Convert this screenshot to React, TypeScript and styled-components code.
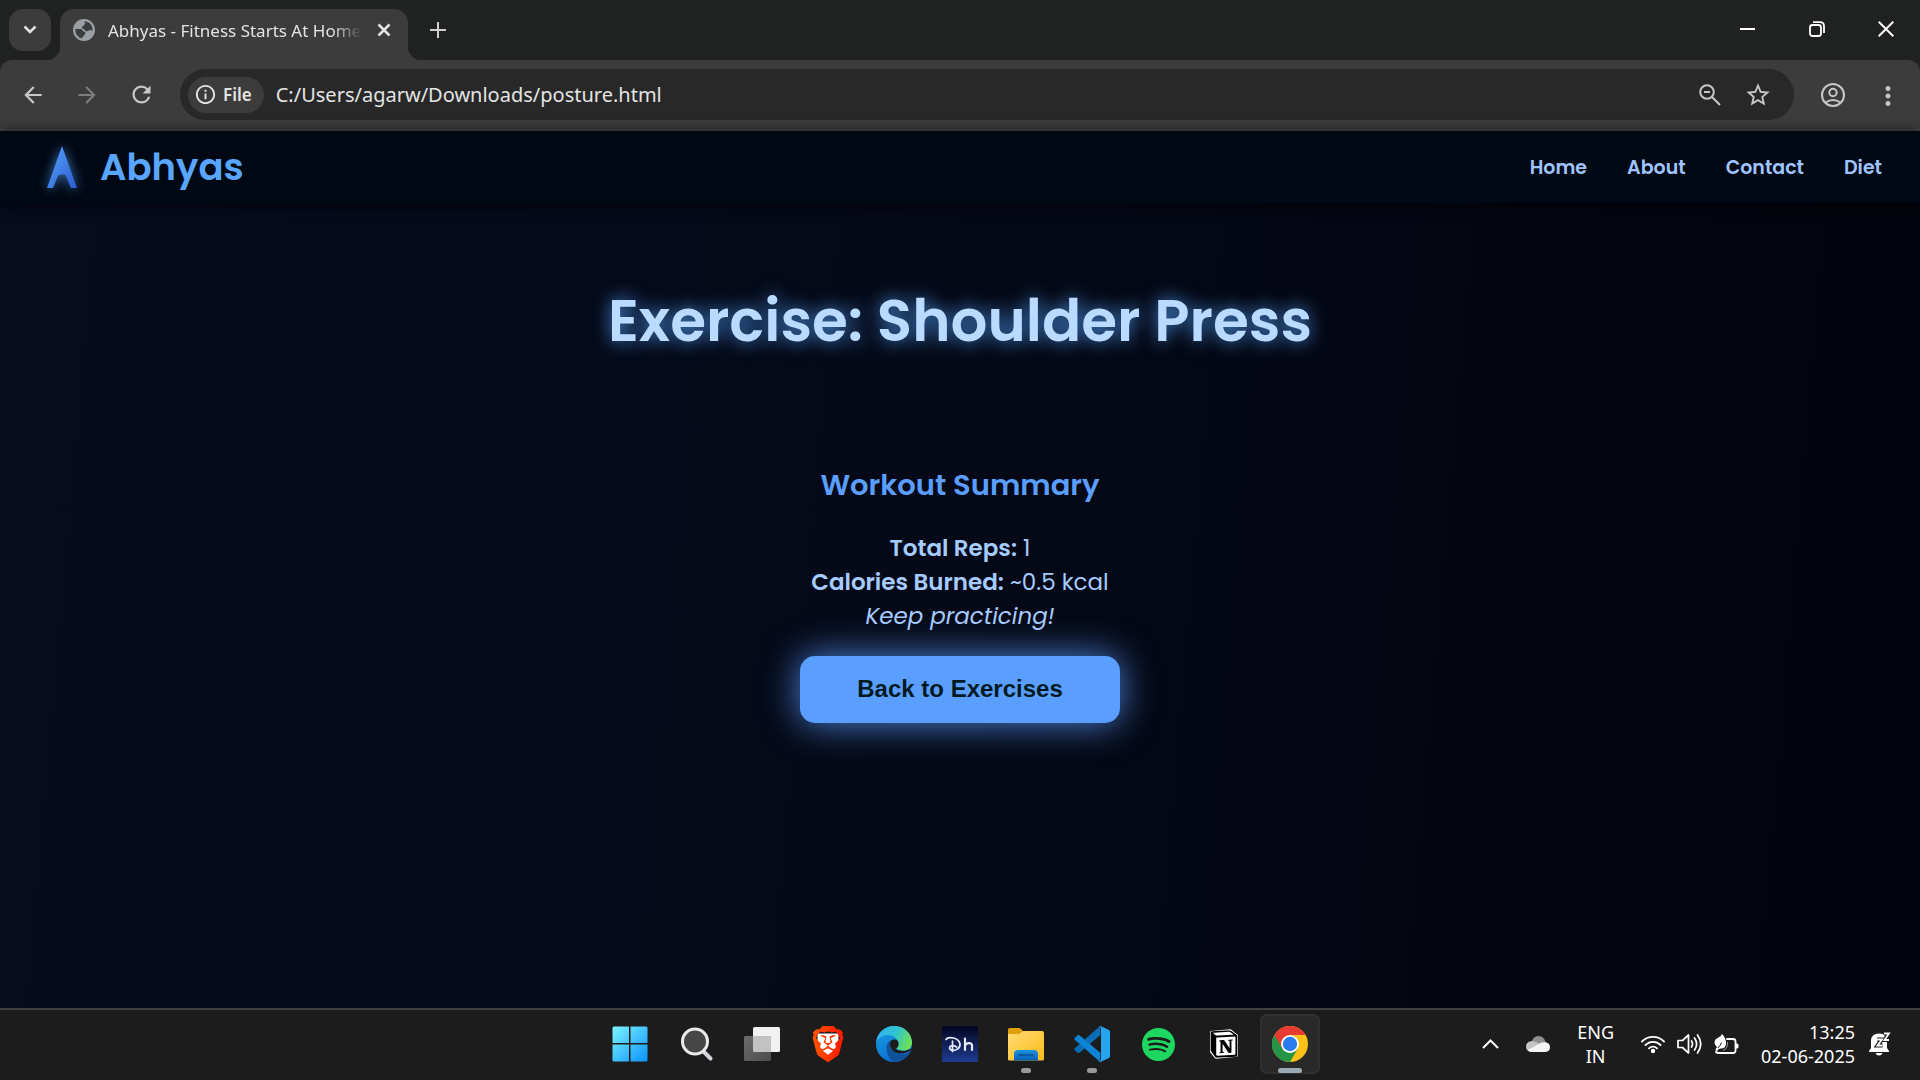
import React from "react";
import styled, { createGlobalStyle, css } from "styled-components";
import { SiBrave, SiNotion, SiSpotify } from "react-icons/si";
import {
  MdArrowBack,
  MdArrowForward,
  MdRefresh,
  MdStarOutline,
  MdOutlineInfo,
  MdMoreVert,
} from "react-icons/md";

const ui = `"Noto Sans", "Open Sans", sans-serif`;
const brand = `Poppins, Inter, "Open Sans", sans-serif`;

const GlobalStyle = createGlobalStyle`
  *, *::before, *::after { box-sizing: border-box; }
  body { margin: 0; background: #020308; }
  h1, h2, p { margin: 0; }
  button { border: 0; padding: 0; background: none; color: inherit; font: inherit; cursor: pointer; }
  a { color: inherit; text-decoration: none; }
  svg { display: block; flex: none; }
`;

const Screen = styled.div`
  display: flex;
  flex-direction: column;
  min-height: 100vh;
  font-family: ${ui};
  color: #e3e3e3;
`;

/* ---------- browser chrome ---------- */

const TabStrip = styled.div`
  display: flex;
  align-items: flex-end;
  height: 60px;
  padding-left: 9px;
  background: #202221;
`;

const TabSearch = styled.button`
  display: grid;
  place-items: center;
  align-self: flex-start;
  width: 42px;
  height: 42px;
  margin-top: 9px;
  border-radius: 14px;
  background: #3c3c3c;
`;

const Tab = styled.div`
  position: relative;
  display: flex;
  align-items: center;
  width: 348px;
  height: 51px;
  margin-left: 9px;
  padding: 0 12px 9px 12px;
  border-radius: 14px 14px 0 0;
  background: #3c3c3c;

  &::before,
  &::after {
    content: "";
    position: absolute;
    bottom: 0;
    width: 14px;
    height: 14px;
  }
  &::before {
    right: 100%;
    background: radial-gradient(circle at 0 0, transparent 14px, #3c3c3c 15px);
  }
  &::after {
    left: 100%;
    background: radial-gradient(circle at 100% 0, transparent 14px, #3c3c3c 15px);
  }
`;

const TabTitle = styled.span`
  flex: 1;
  margin: 2px 10px 0 12px;
  overflow: hidden;
  white-space: nowrap;
  font-size: 17px;
  line-height: 24px;
  mask-image: linear-gradient(90deg, #000 88%, transparent);
`;

const BareButton = styled.button<{ $size?: number; $dim?: boolean }>`
  display: grid;
  place-items: center;
  width: ${(p) => p.$size ?? 24}px;
  height: ${(p) => p.$size ?? 24}px;
  color: ${(p) => (p.$dim ? "#7d7d7d" : "#c7c7c7")};
`;

const NewTab = styled(BareButton)`
  align-self: center;
  margin-left: 18px;
`;

const WindowControls = styled.div`
  display: flex;
  align-self: stretch;
  margin-left: auto;
  color: #fff;
`;

const WindowButton = styled.button`
  display: grid;
  place-items: center;
  width: 69px;
  height: 58px;
`;

const ToolbarFrame = styled.div`
  background: #202221;
`;

const Toolbar = styled.div`
  display: flex;
  align-items: center;
  height: 71px;
  padding: 0 19px;
  border-radius: 12px 12px 0 0;
  background: #3c3c3c;
  border-bottom: 2px solid #444;
`;

const NavGroup = styled.div`
  display: flex;
  gap: 26px;
  margin-right: 25px;
`;

const Omnibox = styled.div`
  display: flex;
  flex: 1;
  align-items: center;
  gap: 12px;
  height: 51px;
  padding: 0 22px 0 8px;
  border-radius: 26px;
  background: #282828;
`;

const FileChip = styled.button`
  display: flex;
  align-items: center;
  gap: 6px;
  height: 36px;
  padding: 0 12px 0 6px;
  border-radius: 18px;
  background: #3c3c3c;
  font-size: 17px;
  font-weight: 600;
`;

const Address = styled.input`
  flex: 1;
  min-width: 0;
  padding: 0;
  border: 0;
  outline: 0;
  background: none;
  color: #e3e3e3;
  font-family: ${ui};
  font-size: 20px;
  line-height: 28px;
`;

const OmniActions = styled.div`
  display: flex;
  gap: 20px;
`;

const ToolActions = styled.div`
  display: flex;
  gap: 26px;
  margin-left: 25px;
`;

/* ---------- web page ---------- */

const Page = styled.div`
  display: flex;
  flex: 1;
  flex-direction: column;
  background: linear-gradient(95deg, #060b1e, #050917 50%, #02030c);
  font-family: ${brand};
`;

const SiteHeader = styled.header`
  display: flex;
  align-items: center;
  justify-content: space-between;
  height: 72px;
  padding: 0 38px 0 40px;
  background: #000814;
  box-shadow: 0 2px 12px rgba(0, 0, 0, 0.8);
`;

const Brand = styled.a`
  display: flex;
  align-items: center;
  gap: 16px;
  color: #58a6ff;
  font-size: 37px;
  font-weight: 600;
  line-height: 48px;
`;

const BrandMark = styled.svg`
  filter: drop-shadow(0 0 6px rgba(88, 166, 255, 0.7));
`;

const SiteNav = styled.nav`
  display: flex;
  gap: 40px;
  color: #a0c4ff;
  font-size: 19px;
  font-weight: 600;
`;

const Main = styled.main`
  display: flex;
  flex-direction: column;
  align-items: center;
  padding-top: 76px;
  text-align: center;
`;

const Title = styled.h1`
  color: #bbdaff;
  font-size: 58px;
  font-weight: 600;
  line-height: 84px;
  text-shadow: 0 0 18px #4a90e2;
`;

const Summary = styled.section`
  display: flex;
  flex-direction: column;
  align-items: center;
  margin-top: 100px;
  color: #a5ccff;
  font-size: 23px;
  line-height: 34px;
`;

const SummaryTitle = styled.h2`
  margin-bottom: 24px;
  color: #5a9eff;
  font-size: 29px;
  font-weight: 600;
  line-height: 44px;
`;

const Strong = styled.strong`
  font-weight: 600;
`;

const BackButton = styled.button`
  width: 320px;
  height: 67px;
  margin-top: 23px;
  padding-bottom: 2px;
  border-radius: 15px;
  background: #5a9eff;
  box-shadow: 0 0 36px rgba(90, 158, 255, 0.85);
  color: #001a1f;
  font-family: "Liberation Sans", Arial, sans-serif;
  font-size: 24px;
  font-weight: 700;
`;

/* ---------- taskbar ---------- */

const Taskbar = styled.footer`
  display: grid;
  grid-template-columns: 1fr auto 1fr;
  height: 72px;
  padding-bottom: 2px;
  border-top: 2px solid #3f3f3f;
  background: #1c1c1c;
  color: #fff;
`;

const Apps = styled.div`
  grid-column: 2;
  display: flex;
  gap: 6px;
  align-items: center;
`;

const AppButton = styled.button<{ $state?: "open" | "active" }>`
  position: relative;
  display: grid;
  place-items: center;
  width: 60px;
  height: 60px;
  border-radius: 7px;
  ${(p) =>
    p.$state === "active" &&
    css`
      background: #292929;
      box-shadow: inset 0 0 0 2px #303030;
    `}
  ${(p) =>
    p.$state &&
    css`
      &::after {
        content: "";
        position: absolute;
        bottom: 1px;
        left: calc(50% - ${p.$state === "active" ? 12 : 5}px);
        width: ${p.$state === "active" ? 24 : 10}px;
        height: 5px;
        border-radius: 3px;
        background: ${p.$state === "active" ? "#9caab5" : "#9a9a9a"};
      }
    `}
`;

const Tray = styled.div`
  display: flex;
  align-items: center;
  justify-content: flex-end;
  padding-right: 29px;
  font-size: 18px;
  line-height: 24px;
`;

const TrayButton = styled.button<{ $gap?: number }>`
  display: flex;
  align-items: center;
  gap: 12px;
  margin-left: ${(p) => p.$gap ?? 22}px;
`;

const Language = styled(TrayButton)`
  display: block;
  text-align: center;
`;

const Clock = styled(TrayButton)`
  display: block;
  text-align: right;
`;

const Disney = styled.span`
  display: grid;
  place-items: center;
  width: 36px;
  height: 36px;
  background: linear-gradient(#030520, #1d3c91);
`;

/* ---------- drawings ---------- */

const GlobeIcon = () => (
  <svg width="24" height="24" viewBox="0 0 24 24">
    <circle cx="12" cy="12" r="11" fill="#9aa0a6" />
    <path
      d="M12.500 3.200q5 .3 7 4.300 1.200 2.500 1 5-2 .2-3.200-.8-.8 1.800-3 1.500-1.800-.2-2-2.200-2.300.2-2.300-1.500 0-1.500 1.500-1.800.6-1.700 2.200-2-1.500-.5-1.200-2.500zM3.200 11h5.500q2 .3 2.300 2.300 2.500 0 2.500 2 0 1.300-1.300 1.500.2 2-2 2.300v1.500Q3.500 19 3.200 11z"
      fill="#3c3c3c"
    />
  </svg>
);

const WindowsIcon = () => (
  <svg width="36" height="36" viewBox="0 0 36 36">
    <defs>
      <linearGradient id="win" x1="0" y1="0" x2="1" y2="1">
        <stop offset="0" stopColor="#7cf4ff" />
        <stop offset="1" stopColor="#0a93fb" />
      </linearGradient>
    </defs>
    <path
      fill="url(#win)"
      d="M2 .5h15v16.500H.5V2Q.5.5 2 .5zM18.500.5H34q1.500 0 1.500 1.500v15h-17zM.5 18.500H17v17H2q-1.500 0-1.500-1.500zM18.500 18.500h17V34q0 1.500-1.500 1.500H18.500z"
    />
  </svg>
);

const SearchIcon = () => (
  <svg width="36" height="36" viewBox="0 0 36 36" fill="none">
    <path d="M26 26l6.500 6.500" stroke="#d2d4da" strokeWidth="4" strokeLinecap="round" />
    <circle cx="17" cy="15.500" r="12.500" fill="#464646" stroke="#e9eaec" strokeWidth="3" />
  </svg>
);

const TaskViewIcon = () => (
  <svg width="38" height="36" viewBox="0 0 38 36">
    <defs>
      <linearGradient id="pane" x1="0" y1="0" x2="1" y2="1">
        <stop offset="0" stopColor="#6c6c6c" />
        <stop offset="1" stopColor="#4c4c4c" />
      </linearGradient>
    </defs>
    <rect x="10" y="1" width="27" height="25" rx="1.500" fill="#f1f1f1" />
    <rect x="1" y="10" width="27" height="25" rx="1.500" fill="url(#pane)" />
    <path d="M10 10h18v16H11.500Q10 26 10 24.500z" fill="#c2c2c2" />
  </svg>
);

const BraveIcon = () => (
  <svg width="36" height="36" viewBox="0 0 24 24">
    <defs>
      <linearGradient id="brave">
        <stop offset="0" stopColor="#ff5500" />
        <stop offset="1" stopColor="#ff1500" />
      </linearGradient>
    </defs>
    <path d="M5 5h14v10l-7 6-7-6z" fill="#fff" />
    <SiBrave size={24} style={{ fill: "url(#brave)" }} />
  </svg>
);

const EdgeIcon = () => (
  <svg width="36" height="36" viewBox="0 0 36 36">
    <defs>
      <linearGradient id="edgeTop" x1="0" y1="0.300" x2="1" y2="0.600">
        <stop offset="0" stopColor="#33b4f0" />
        <stop offset="0.500" stopColor="#2fc4cf" />
        <stop offset="1" stopColor="#6fe24e" />
      </linearGradient>
      <linearGradient id="edgeLeft" x1="0" y1="0" x2="0.400" y2="1">
        <stop offset="0" stopColor="#1ca3e4" />
        <stop offset="1" stopColor="#0a6fd0" />
      </linearGradient>
    </defs>
    <circle cx="18" cy="18" r="18" fill="url(#edgeLeft)" />
    <path d="M10.500 22C10.500 17 14 13.500 19 14c-5 1.500-6 6-3.500 10 3.500 5 11 5.500 17.500 2.500C30 32.500 24.500 36 19 36c-5-1-8.500-8-8.500-14z" fill="#10529c" />
    <path d="M14.500 17c-1.500 6 4 11.500 12 10.500 3-.3 5.500-1.500 7-2.200L37 22l-8 3-8-1z" fill="#1c1c1c" />
    <circle cx="18.500" cy="18" r="4.600" fill="#1c1c1c" />
    <path d="M0 17C1 7 9 0 18 0c10.500 0 18 7.500 18 16.500 0 5-3.500 8-8.500 8-4 0-6.500-1-6.500-2.300 0-1 1.700-1.700 1.700-4.200C22.700 13 17.500 9 11.500 9 6 9 1.500 12.500 0 17z" fill="url(#edgeTop)" />
  </svg>
);

const DisneyIcon = () => (
  <svg width="36" height="36" viewBox="0 0 36 36" fill="none" stroke="#e8ecfa" strokeLinecap="round" strokeLinejoin="round">
    <path d="M4 13.500c2-3.500 13-2 14 4.500.5 4.500-5 7-8 6.300-3.500-.8-3-4.800 1-4.600 1.500.1 2.800.7 3.500 1.300M10.500 15v10.500" strokeWidth="1.700" />
    <path d="M23 12.500V24M23 19.500c1.500-3 7-3.500 7 0V24" strokeWidth="2.200" />
  </svg>
);

const ExplorerIcon = () => (
  <svg width="36" height="36" viewBox="0 0 36 36">
    <defs>
      <linearGradient id="folder" x1="0" y1="0" x2="1" y2="1">
        <stop offset="0" stopColor="#ffdc73" />
        <stop offset="1" stopColor="#fcbb1c" />
      </linearGradient>
      <linearGradient id="tray" x1="0" y1="0" x2="0" y2="1">
        <stop offset="0" stopColor="#1b94e0" />
        <stop offset="1" stopColor="#0961b3" />
      </linearGradient>
    </defs>
    <path d="M0 3.500Q0 2 1.500 2H11q1 0 2 1l2.500 2.500L11 10H0z" fill="#dfa00a" />
    <path d="M0 8h10q1.500 0 2.500-1l1.500-1.300q.8-.7 2-.7h18q2 0 2 2v26q0 1.500-1.500 1.500h-33Q0 34.500 0 33z" fill="url(#folder)" />
    <path d="M6 34.500V28q0-4 4-4h16q4 0 4 4v6.500z" fill="url(#tray)" />
    <path d="M11 29h14" stroke="#0b4f91" strokeWidth="1.500" strokeLinecap="round" />
  </svg>
);

const VSCodeIcon = () => (
  <svg width="36" height="36" viewBox="0 0 36 36">
    <path d="M26.500 9L5.500 26.700Q4.500 27.500 3.500 26.700L.8 24.300Q0 23.300.8 22.300L26 0z" fill="#0a6cb4" />
    <path d="M26.500 27L5.500 9.300Q4.500 8.500 3.500 9.300L.8 11.700Q0 12.700.8 13.700L26 36z" fill="#0d84d4" />
    <path d="M26.500 0L35 4q1 .5 1 1.700v24.600q0 1.200-1 1.700l-8.500 4q-1 0-2-1 2.500 1 2.500-1.500v-31Q27 0 24.500 1q1-1 2-1z" fill="#25a5f0" />
  </svg>
);

const NotionIcon = () => (
  <svg width="30" height="30" viewBox="-1 -1 26 26">
    <path d="M1 1.800L17.500.3 23 4.500V22L5 23.800 1 19z" fill="#fff" stroke="#fff" strokeWidth="2" strokeLinejoin="round" />
    <SiNotion size={24} color="#000" />
  </svg>
);

const ChromeIcon = () => (
  <svg width="36" height="36" viewBox="0 0 36 36">
    <circle cx="18" cy="18" r="18" fill="#fbc116" />
    <path d="M2.400 9A18 18 0 0 0 18 36l7.800-13.500L18 18z" fill="#249446" />
    <path d="M2.400 9a18 18 0 0 1 31.200 0H18l-7.800 13.500z" fill="#e63b2e" />
    <circle cx="18" cy="18" r="9" fill="#fff" />
    <circle cx="18" cy="18" r="7.200" fill="#2a7bee" />
  </svg>
);

const CloudIcon = () => (
  <svg width="24" height="16" viewBox="0 0 24 16">
    <path d="M5 7Q7 0 12.500 0T20 7l-6 4z" fill="#8f8f8f" />
    <path d="M4.500 15.500Q0 15 0 10.500T5 5.300q4-.6 7 1.700l6 4-8 4.500z" fill="#c4c4c4" />
    <path d="M12 8.500q3-2.500 7-2.200 5 .7 5 5T19.500 16H5Q3 16 1.500 14z" fill="#f4f4f4" />
  </svg>
);

const WifiIcon = () => (
  <svg width="24" height="20" viewBox="0 0 24 20" fill="none" stroke="#fff" strokeWidth="1.800" strokeLinecap="round">
    <path d="M1 7.500a15.500 15.500 0 0 1 22 0M4.500 11a10.500 10.500 0 0 1 15 0M8 14.300a5.600 5.600 0 0 1 8 0" />
    <circle cx="12" cy="17" r="1.300" fill="#fff" />
  </svg>
);

const SoundIcon = () => (
  <svg width="25" height="22" viewBox="0 0 25 22" fill="none" stroke="#fff" strokeWidth="1.700" strokeLinecap="round" strokeLinejoin="round">
    <path d="M1 7.500h4.500L11.500 2v18l-6-5.500H1z" />
    <path d="M14.500 8q2 3 0 6M17.500 5q4.300 6 0 12M20.500 2q6.500 9 0 18" />
  </svg>
);

const BatteryIcon = () => (
  <svg width="25" height="21" viewBox="0 0 25 21" fill="none">
    <path d="M13 5h6q2.500 0 2.500 2.500v9Q21.500 19 19 19H4.500Q3 19 2 18" stroke="#fff" strokeWidth="1.800" strokeLinecap="round" />
    <path d="M22 9.500h1q1.500 0 1.500 1.500v2q0 1.500-1.500 1.500h-1z" fill="#fff" />
    <path d="M8 0q4 4 4 9 0 5.500-5 5.500-3 0-4 3-1 0-1.500-1 0-2 1.500-3.500Q.5 11 .5 8.500.5 5 4.500 3.500 7 2.500 8 0z" fill="#fff" />
    <path d="M4 14q2-2 3.500-5.500" stroke="#1c1c1c" strokeWidth="1" />
    <path d="M9 16.500q4-1 4.500-6V8" stroke="#999" strokeWidth="1" />
  </svg>
);

const BellIcon = () => (
  <svg width="22" height="24" viewBox="0 0 22 24" fill="none">
    <path d="M10 1.500q8 0 8 7.500v7l2 3v1H0v-1l2-3V9q0-7.500 8-7.500zM6.500 21h7q-1 2.500-3.500 2.500T6.500 21z" fill="#fff" />
    <path d="M8 7.500H13L8.500 13.500h5M15 1.500h5L15.500 8H20" stroke="#1c1c1c" strokeWidth="4" />
    <path d="M8 7.500H13L8.500 13.500h5M15 1.500h5L15.500 8H20" stroke="#fff" strokeWidth="1.800" />
  </svg>
);

export default function App() {
  return (
    <Screen>
      <GlobalStyle />
      <TabStrip>
        <TabSearch aria-label="Search tabs">
          <svg width="14" height="10" viewBox="0 0 14 10" fill="none" stroke="#e3e3e3" strokeWidth="2.500">
            <path d="M1.500 1.500L7 7l5.500-5.500" />
          </svg>
        </TabSearch>
        <Tab>
          <GlobeIcon />
          <TabTitle>Abhyas - Fitness Starts At Home</TabTitle>
          <BareButton aria-label="Close tab">
            <svg width="14" height="14" viewBox="0 0 14 14" stroke="#e3e3e3" strokeWidth="2.500">
              <path d="M1.500 1.500l11 11M12.500 1.500l-11 11" />
            </svg>
          </BareButton>
        </Tab>
        <NewTab aria-label="New tab">
          <svg width="16" height="16" viewBox="0 0 16 16" stroke="#d0d0d0" strokeWidth="2">
            <path d="M8 0v16M0 8h16" />
          </svg>
        </NewTab>
        <WindowControls>
          <WindowButton aria-label="Minimize">
            <svg width="15" height="15" viewBox="0 0 15 15"><path d="M0 7h15" stroke="#fff" strokeWidth="2" /></svg>
          </WindowButton>
          <WindowButton aria-label="Restore">
            <svg width="16" height="16" viewBox="0 0 16 16" fill="none" stroke="#fff" strokeWidth="1.800">
              <rect x="1" y="4" width="11" height="11" rx="2.500" />
              <path d="M4 1.200h7q4 0 4 4V12" />
            </svg>
          </WindowButton>
          <WindowButton aria-label="Close">
            <svg width="16" height="16" viewBox="0 0 16 16" stroke="#fff" strokeWidth="2"><path d="M.7.700l14.600 14.600M15.300.700L.7 15.300" /></svg>
          </WindowButton>
        </WindowControls>
      </TabStrip>

      <ToolbarFrame>
        <Toolbar>
          <NavGroup>
            <BareButton $size={28} aria-label="Back"><MdArrowBack size={26} /></BareButton>
            <BareButton $size={28} $dim aria-label="Forward"><MdArrowForward size={26} /></BareButton>
            <BareButton $size={28} aria-label="Reload"><MdRefresh size={27} /></BareButton>
          </NavGroup>
          <Omnibox>
            <FileChip><MdOutlineInfo size={23} />File</FileChip>
            <Address aria-label="Address" defaultValue="C:/Users/agarw/Downloads/posture.html" />
            <OmniActions>
              <BareButton $size={28} aria-label="Zoom">
                <svg width="22" height="22" viewBox="0 0 22 22" fill="none" stroke="currentColor" strokeWidth="2">
                  <circle cx="8" cy="8" r="6.800" />
                  <path d="M5 8h6M13 13l8 8" />
                </svg>
              </BareButton>
              <BareButton $size={28} aria-label="Bookmark"><MdStarOutline size={28} /></BareButton>
            </OmniActions>
          </Omnibox>
          <ToolActions>
            <BareButton $size={28} aria-label="Profile">
              <svg width="24" height="24" viewBox="0 0 24 24" fill="none" stroke="currentColor" strokeWidth="2">
                <circle cx="12" cy="12" r="11" />
                <circle cx="12" cy="9.500" r="3.700" />
                <path d="M4.500 19.500q7.500-5 15 0" />
              </svg>
            </BareButton>
            <BareButton $size={28} aria-label="Menu"><MdMoreVert size={30} /></BareButton>
          </ToolActions>
        </Toolbar>
      </ToolbarFrame>

      <Page>
        <SiteHeader>
          <Brand href="#">
            <BrandMark width="44" height="44" viewBox="0 0 44 44">
              <defs>
                <linearGradient id="mark" x1="0" y1="0" x2="1" y2="1">
                  <stop offset="0" stopColor="#58a6ff" />
                  <stop offset="1" stopColor="#2a5bd0" />
                </linearGradient>
              </defs>
              <path d="M22 1L37 43h-6l-5-12q-1-1.500-2.500-1.500h-3Q19 29.500 18 31l-5 12H7z" fill="url(#mark)" />
            </BrandMark>
            Abhyas
          </Brand>
          <SiteNav>
            <a href="#home">Home</a>
            <a href="#about">About</a>
            <a href="#contact">Contact</a>
            <a href="#diet">Diet</a>
          </SiteNav>
        </SiteHeader>
        <Main>
          <Title>Exercise: Shoulder Press</Title>
          <Summary>
            <SummaryTitle>Workout Summary</SummaryTitle>
            <p><Strong>Total Reps:</Strong> 1</p>
            <p><Strong>Calories Burned:</Strong> ~0.5 kcal</p>
            <p><em>Keep practicing!</em></p>
            <BackButton>Back to Exercises</BackButton>
          </Summary>
        </Main>
      </Page>

      <Taskbar>
        <Apps>
          <AppButton aria-label="Start"><WindowsIcon /></AppButton>
          <AppButton aria-label="Search"><SearchIcon /></AppButton>
          <AppButton aria-label="Task view"><TaskViewIcon /></AppButton>
          <AppButton aria-label="Brave"><BraveIcon /></AppButton>
          <AppButton aria-label="Edge"><EdgeIcon /></AppButton>
          <AppButton aria-label="Disney+ Hotstar"><Disney><DisneyIcon /></Disney></AppButton>
          <AppButton $state="open" aria-label="File Explorer"><ExplorerIcon /></AppButton>
          <AppButton $state="open" aria-label="Visual Studio Code"><VSCodeIcon /></AppButton>
          <AppButton aria-label="Spotify"><SiSpotify size={33} color="#1ed760" /></AppButton>
          <AppButton aria-label="Notion"><NotionIcon /></AppButton>
          <AppButton $state="active" aria-label="Chrome"><ChromeIcon /></AppButton>
        </Apps>
        <Tray>
          <TrayButton aria-label="Hidden icons">
            <svg width="17" height="10" viewBox="0 0 17 10" fill="none" stroke="#fff" strokeWidth="2"><path d="M1 9l7.500-7.500L16 9" /></svg>
          </TrayButton>
          <TrayButton $gap={27} aria-label="OneDrive"><CloudIcon /></TrayButton>
          <Language $gap={27}>ENG<br />IN</Language>
          <TrayButton $gap={27} aria-label="Network, sound and battery">
            <WifiIcon />
            <SoundIcon />
            <BatteryIcon />
          </TrayButton>
          <Clock>13:25<br />02-06-2025</Clock>
          <TrayButton $gap={14} aria-label="Notifications"><BellIcon /></TrayButton>
        </Tray>
      </Taskbar>
    </Screen>
  );
}
